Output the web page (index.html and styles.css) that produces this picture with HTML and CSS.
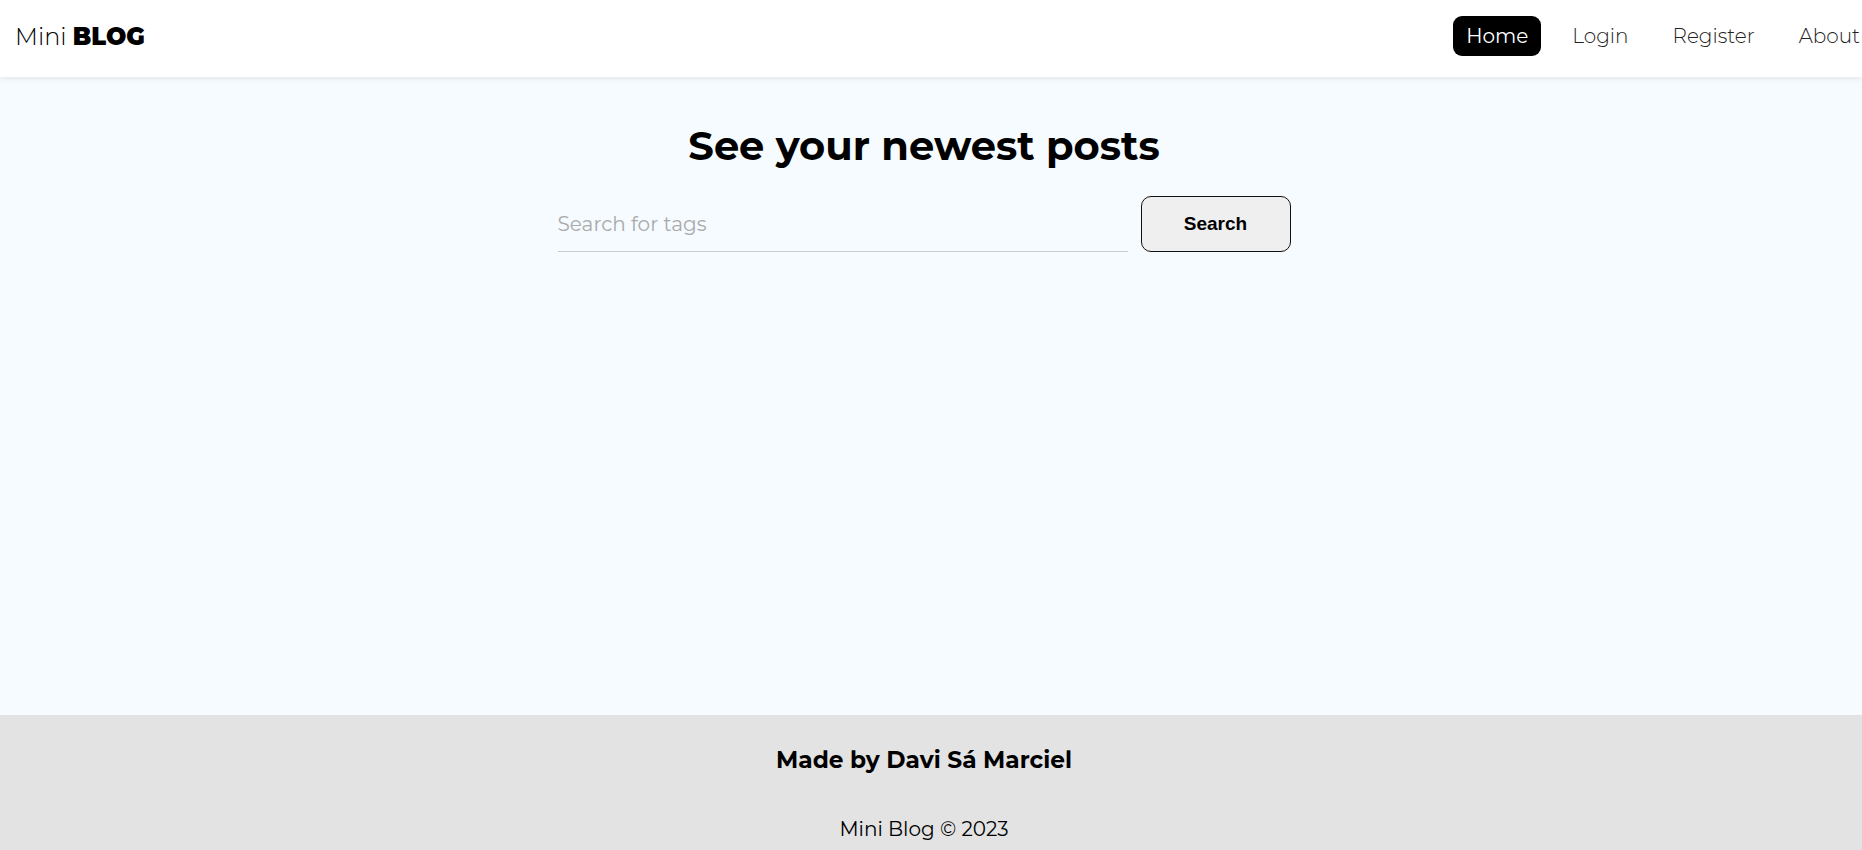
FILE: index.html
```html
<!DOCTYPE html>
<html lang="en">
<head>
<meta charset="utf-8">
<title>Mini Blog</title>
<link rel="stylesheet" href="styles.css">
</head>
<body>
  <nav class="navbar">
    <a class="brand" href="#">Mini <span class="brand-bold">BLOG</span></a>
    <ul class="nav-links">
      <li><a class="nav-link active" href="#">Home</a></li>
      <li><a class="nav-link" href="#">Login</a></li>
      <li><a class="nav-link" href="#">Register</a></li>
      <li><a class="nav-link" href="#">About</a></li>
    </ul>
  </nav>
  <main class="home">
    <h1 class="home-title">See your newest posts</h1>
    <form class="search-form">
      <input class="search-input" type="text" placeholder="Search for tags">
      <button class="search-btn" type="button">Search</button>
    </form>
  </main>
  <footer class="footer">
    <h3 class="footer-title">Made by Davi Sá Marciel</h3>
    <p class="footer-copy">Mini Blog &copy; 2023</p>
  </footer>
</body>
</html>
```

FILE: styles.css
```css
* { box-sizing: border-box; }

html, body {
  margin: 0;
  padding: 0;
}

body {
  font-family: "Montserrat", "Inter", "Noto Sans", sans-serif;
  color: #000;
  min-height: 100vh;
  display: flex;
  flex-direction: column;
  overflow-x: hidden;
}

.navbar {
  height: 77px;
  display: flex;
  align-items: center;
  justify-content: space-between;
  padding: 0 0 5px 15px;
  background: #fff;
  box-shadow: 0 2px 6px rgba(0, 0, 0, 0.08);
  position: relative;
  z-index: 1;
  overflow: hidden;
}

.brand {
  font-size: 24px;
  color: #000;
  text-decoration: none;
  font-weight: 300;
}

.brand-bold {
  font-weight: 900;
}

.nav-links {
  list-style: none;
  display: flex;
  gap: 18px;
  margin: 0 -11px 0 0;
  padding: 0;
}

.nav-link {
  display: block;
  font-size: 20px;
  line-height: 28px;
  padding: 6px 13px;
  border-radius: 9px;
  color: #222;
  text-decoration: none;
  font-weight: 300;
}

.nav-link.active {
  background: #000;
  color: #fff;
  font-weight: 400;
}

.home {
  flex: 1;
  background: #f5fbff;
  display: flex;
  flex-direction: column;
  align-items: center;
  padding-right: 14px;
}

.home-title {
  margin: 45px 0 0;
  font-size: 40px;
  line-height: 48px;
  font-weight: 700;
}

.search-form {
  display: flex;
  gap: 13px;
  margin-top: 26px;
  width: 733px;
}

.search-input {
  flex: 1;
  height: 56px;
  border: none;
  border-bottom: 1px solid #c8cacc;
  background: transparent;
  font-family: inherit;
  font-size: 20px;
  padding: 0;
  outline: none;
}

.search-input::placeholder {
  color: #aaa;
  font-weight: 400;
}

.search-btn {
  width: 150px;
  height: 56px;
  border: 1px solid #111;
  border-radius: 10px;
  background: #efefef;
  font-family: "Liberation Sans", Arial, sans-serif;
  font-weight: 700;
  font-size: 19px;
  color: #000;
}

.footer {
  background: #e3e3e3;
  padding: 30px 14px 9px 0;
  text-align: center;
}

.footer-title {
  margin: 0;
  font-size: 23.3px;
  line-height: 30px;
  font-weight: 700;
}

.footer-copy {
  margin: 42px 0 0;
  font-size: 20px;
  line-height: 24px;
  font-weight: 400;
}
```
